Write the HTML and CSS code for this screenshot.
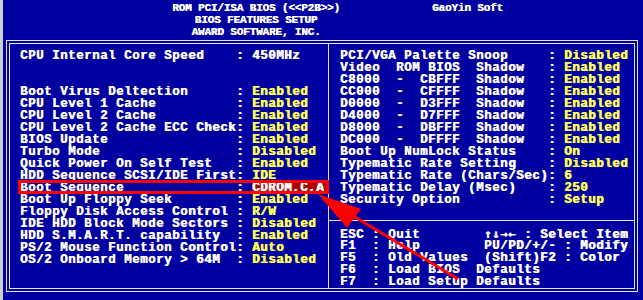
FILE: index.html
```html
<!DOCTYPE html>
<html>
<head>
<meta charset="utf-8">
<title>BIOS FEATURES SETUP</title>
<link rel="stylesheet" href="styles.css">
</head>
<body>
	<div class="screen">
		<div class="head">
			<div class="title">
				<p>ROM PCI/ISA BIOS (&lt;&lt;P2B&gt;&gt;)</p>
				<p>BIOS FEATURES SETUP</p>
				<p>AWARD SOFTWARE, INC.</p>
			</div>
			<p class="brand">GaoYin Soft</p>
		</div>

		<div class="frame">
			<div class="inner">
				<!--左栏-->
				<div class="left">
					<p>CPU Internal Core Speed    : 450MHz</p>
					<p> </p>
					<p> </p>
					<p>Boot Virus Deltection      : <b>Enabled</b></p>
					<p>CPU Level 1 Cache          : <b>Enabled</b></p>
					<p>CPU Level 2 Cache          : <b>Enabled</b></p>
					<p>CPU Level 2 Cache ECC Check: <b>Enabled</b></p>
					<p>BIOS Update                : <b>Enabled</b></p>
					<p>Turbo Mode                 : <b>Disabled</b></p>
					<p>Quick Power On Self Test   : <b>Enabled</b></p>
					<p>HDD Sequence SCSI/IDE First: <b>IDE</b></p>
					<p class="sel"><span>Boot Sequence              : </span><span class="pick">CDROM,C,A</span></p>
					<p>Boot Up Floppy Seek        : <b>Enabled</b></p>
					<p>Floppy Disk Access Control : <b>R/W</b></p>
					<p>IDE HDD Block Mode Sectors : <b>Disabled</b></p>
					<p>HDD S.M.A.R.T. capability  : <b>Enabled</b></p>
					<p>PS/2 Mouse Function Control: <b>Auto</b></p>
					<p>OS/2 Onboard Memory &gt; 64M  : <b>Disabled</b></p>
				</div>
				<!--右栏-->
				<div class="right">
					<div class="opts">
						<p>PCI/VGA Palette Snoop     : <b>Disabled</b></p>
						<p>Video  ROM BIOS  Shadow   : <b>Enabled</b></p>
						<p>C8000  -  CBFFF  Shadow   : <b>Enabled</b></p>
						<p>CC000  -  CFFFF  Shadow   : <b>Enabled</b></p>
						<p>D0000  -  D3FFF  Shadow   : <b>Enabled</b></p>
						<p>D4000  -  D7FFF  Shadow   : <b>Enabled</b></p>
						<p>D8000  -  DBFFF  Shadow   : <b>Enabled</b></p>
						<p>DC000  -  DFFFF  Shadow   : <b>Enabled</b></p>
						<p>Boot Up NumLock Status    : <b>On</b></p>
						<p>Typematic Rate Setting    : <b>Disabled</b></p>
						<p>Typematic Rate (Chars/Sec): <b>6</b></p>
						<p>Typematic Delay (Msec)    : <b>250</b></p>
						<p>Security Option           : <b>Setup</b></p>
					</div>
					<div class="keys">
						<p>ESC : Quit        <i>↑↓→←</i> : Select Item</p>
						<p>F1  : Help        PU/PD/+/- : Modify</p>
						<p>F5  : Old Values  (Shift)F2 : Color</p>
						<p>F6  : Load BIOS  Defaults</p>
						<p>F7  : Load Setup Defaults</p>
					</div>
				</div>
			</div>
		</div>

		<!--红色标注-->
		<svg class="note" width="643" height="300">
			<rect x="19.5" y="181.5" width="308" height="11" fill="none" stroke="#f00" stroke-width="3"/>
			<line x1="350" y1="214" x2="458" y2="279" stroke="#f00" stroke-width="3"/>
			<polygon points="318,194 361,209 347,228" fill="#f00"/>
		</svg>
	</div>
</body>
</html>
```

FILE: styles.css
```css
*{margin:0; padding:0;}
body{background:#0000a0; color:#fff; font:bold 12.5px "Liberation Mono", monospace;}
.screen{width:643px; height:300px; padding-left:3px; box-sizing:border-box; position:relative; overflow:hidden; background:#0000a0; box-shadow:inset 3px 0 #cfcfcf;}

/*标题*/
.head{height:40px; padding:2px 0 0 163px; box-sizing:border-box; display:flex; align-items:flex-start; font-size:11px; line-height:12px; letter-spacing:-0.15px; text-shadow:0.4px 0 currentColor;}
.head .title{width:180px; text-align:center;}
.head .brand{margin-left:86px;}

/*双线框*/
.frame{margin-left:3px; width:632px; height:252px; padding:2px; border:1px solid #e4e4f0; box-sizing:border-box;}
.inner{height:100%; border:1px solid #e4e4f0; box-sizing:border-box; display:flex; line-height:12px; letter-spacing:0.5px; text-shadow:0.6px 0 currentColor;}
.inner p{height:12px; white-space:pre;}
.inner b{color:#ffff55;}
.inner i{font-style:normal; font-family:"DejaVu Sans Mono", monospace; font-size:12px; letter-spacing:0.78px;}

.left{width:319px; padding:6px 0 0 10px; border-right:1px solid #e4e4f0; box-sizing:border-box;}
.left .sel{display:flex;}
.left .pick{flex:1; background:#a80000;}

.right{flex:1; display:flex; flex-direction:column;}
.right .opts{height:179px; padding:6px 0 0 11px; border-bottom:1px solid #e4e4f0; box-sizing:border-box;}
.right .keys{flex:1; padding:7px 0 0 11px;}

.note{position:absolute; left:0; top:0; pointer-events:none;}
```
